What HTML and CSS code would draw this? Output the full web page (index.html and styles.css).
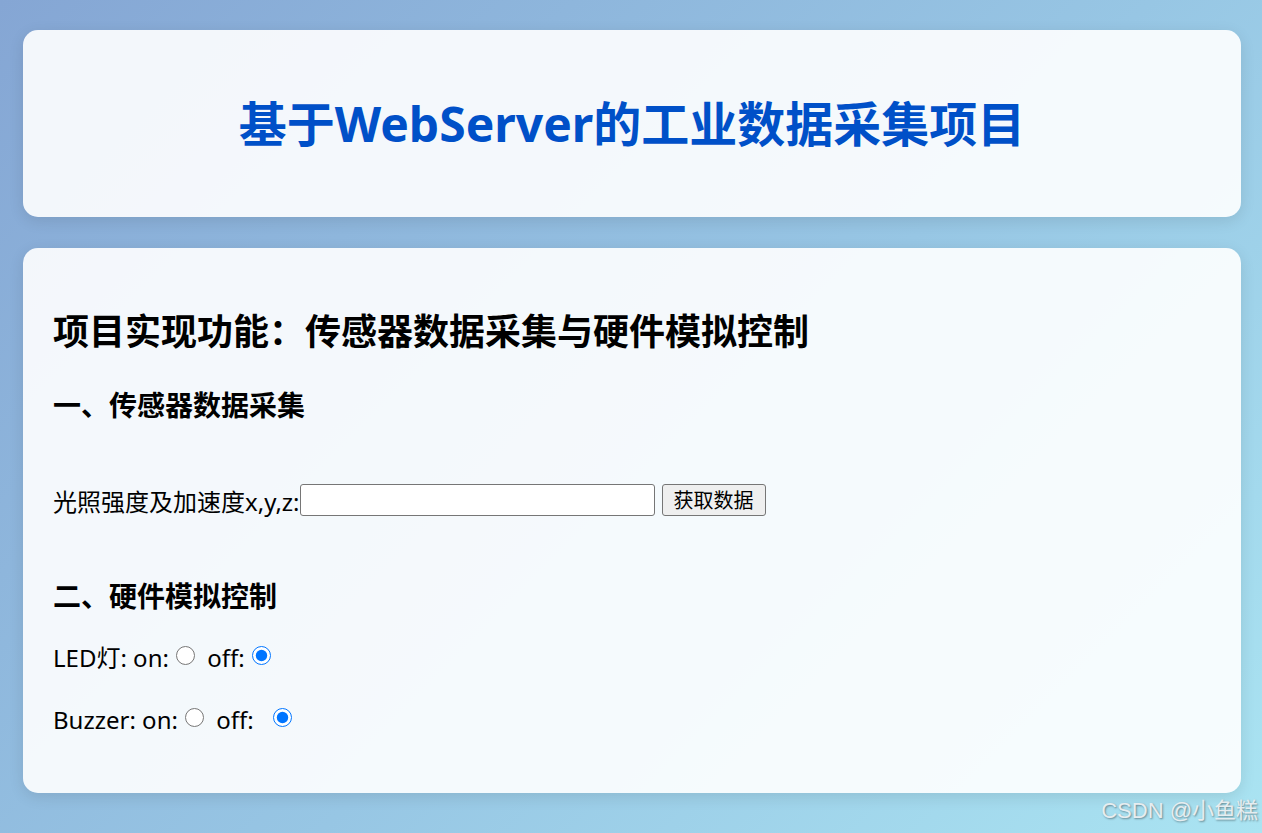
FILE: index.html
```html
<!DOCTYPE html>
<html lang="zh-CN">
<head>
  <meta charset="UTF-8">
  <meta name="viewport" content="width=device-width, initial-scale=1.0">
  <title>工业数据采集</title>
  <link rel="stylesheet" href="styles.css">
</head>
<body>
  <div class="page">
    <!-- page title -->
    <div class="card header-card">
      <h1 class="title">基于WebServer的工业数据采集项目</h1>
    </div>

    <div class="card main-card">
      <h2>项目实现功能：传感器数据采集与硬件模拟控制</h2>

      <h3>一、传感器数据采集</h3>
      <p class="data-row"><label for="sensor-data">光照强度及加速度x,y,z:</label><input type="text" id="sensor-data"><button class="get-button">获取数据</button></p>

      <h3 class="control-title">二、硬件模拟控制</h3>
      <p class="ctrl-row">LED灯: on:<input type="radio" name="led" value="on"> off:<input type="radio" name="led" value="off" checked></p>
      <p class="ctrl-row">Buzzer: on:<input type="radio" name="buzzer" value="on"> off: &nbsp;<input type="radio" name="buzzer" value="off" checked></p>
    </div>
  </div>
  <div class="watermark">CSDN @小鱼糕</div>
</body>
</html>
```

FILE: styles.css
```css
html {
  min-height: 100%;
}

body {
  margin: 0;
  min-height: 100vh;
  background: linear-gradient(135deg, #85a6d4 0%, #97c6e4 55%, #aae4f2 100%);
  font-family: "Noto Sans", "Noto Sans CJK SC", sans-serif;
  color: #000;
  position: relative;
}

.page {
  padding: 30px 21px 40px 23px;
}

.card {
  background-color: rgba(255, 255, 255, 0.9);
  border-radius: 15px;
  box-shadow: 0 4px 15px rgba(0, 0, 0, 0.1);
  padding: 30px;
}

.header-card {
  margin-bottom: 31px;
}

.title {
  margin: 32px 0;
  font-size: 48px;
  line-height: 63px;
  font-weight: bold;
  text-align: center;
  color: #0050c8;
}

.main-card h2 {
  margin: 30px 0;
  font-size: 36px;
  line-height: 48px;
  font-weight: bold;
}

.main-card h3 {
  margin: 30px 0 0;
  font-size: 28px;
  line-height: 38px;
  font-weight: bold;
}

.data-row {
  display: flex;
  align-items: center;
  margin: 58px 0 0;
  height: 36px;
  font-size: 24px;
}

.data-row input {
  box-sizing: border-box;
  width: 355px;
  height: 32px;
  margin: 0;
  border: 1px solid #767676;
  border-radius: 3px;
  background: #fff;
}

.get-button {
  box-sizing: border-box;
  height: 32px;
  margin-left: 7px;
  padding: 0 11px;
  font-family: "Noto Sans CJK SC", sans-serif;
  font-size: 20px;
  line-height: 28px;
  background-color: #efefef;
  border: 1px solid #767676;
  border-radius: 3px;
  color: #000;
}

.main-card .control-title {
  margin-top: 59px;
  margin-bottom: 21px;
}

.ctrl-row {
  margin: 24px 0;
  font-size: 24px;
  line-height: 38px;
}

.ctrl-row input {
  width: 19px;
  height: 19px;
  margin: 0 6px 0 7px;
  vertical-align: 2px;
}

.watermark {
  position: absolute;
  right: 4px;
  bottom: 9px;
  font-family: "Liberation Sans", "Noto Sans CJK SC", sans-serif;
  font-size: 22px;
  color: #e6edf0;
  text-shadow: 1px 1px 2px rgba(0, 0, 0, 0.4);
}
```
